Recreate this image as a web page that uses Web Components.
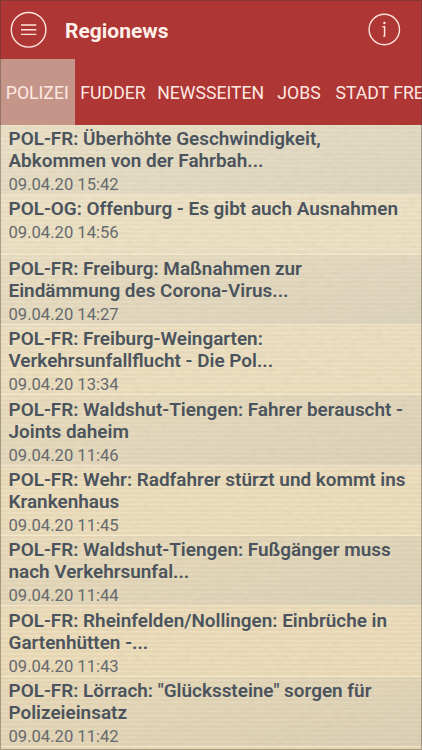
<!DOCTYPE html>
<html lang="de">
<head>
<meta charset="utf-8">
<title>Regionews</title>
<style>
    html, body{
        margin: 0;
        height: 100%;
        overflow: hidden;
    }
    body{
        font-family: Roboto, "Liberation Sans", sans-serif;
    }
</style>
</head>
<body>
<news-app>
    <news-header slot="header" name="Regionews"></news-header>
    <news-tabs slot="tabs">
        <news-tab active>POLIZEI</news-tab>
        <news-tab>FUDDER</news-tab>
        <news-tab>NEWSSEITEN</news-tab>
        <news-tab wide>JOBS</news-tab>
        <news-tab wide>STADT FRE</news-tab>
    </news-tabs>
    <news-item date="09.04.20 15:42">POL-FR: Überhöhte Geschwindigkeit,<br>Abkommen von der Fahrbah...</news-item>
    <news-item date="09.04.20 14:56" short>POL-OG: Offenburg - Es gibt auch Ausnahmen</news-item>
    <news-item date="09.04.20 14:27">POL-FR: Freiburg: Maßnahmen zur<br>Eindämmung des Corona-Virus...</news-item>
    <news-item date="09.04.20 13:34">POL-FR: Freiburg-Weingarten:<br>Verkehrsunfallflucht - Die Pol...</news-item>
    <news-item date="09.04.20 11:46">POL-FR: Waldshut-Tiengen: Fahrer berauscht -<br>Joints daheim</news-item>
    <news-item date="09.04.20 11:45">POL-FR: Wehr: Radfahrer stürzt und kommt ins<br>Krankenhaus</news-item>
    <news-item date="09.04.20 11:44">POL-FR: Waldshut-Tiengen: Fußgänger muss<br>nach Verkehrsunfal...</news-item>
    <news-item date="09.04.20 11:43">POL-FR: Rheinfelden/Nollingen: Einbrüche in<br>Gartenhütten -...</news-item>
    <news-item date="09.04.20 11:42">POL-FR: Lörrach: "Glückssteine" sorgen für<br>Polizeieinsatz</news-item>
</news-app>

<script>
class NewsApp extends HTMLElement{
    constructor(){
        super();
        this.attachShadow({mode: 'open'});
    }
    connectedCallback(){
        this.shadowRoot.innerHTML = `
        <style>
            :host{
                display: flex;
                flex-direction: column;
                height: 750px;
                position: relative;
                overflow: hidden;
            }
            .list{
                flex: 1;
                position: relative;
                overflow: hidden;
                background: linear-gradient(#e9dfc5, #e8dabb 40%, #e7d6b3);
            }
            .paper{
                position: absolute;
                inset: 0;
                width: 100%;
                height: 100%;
            }
            .rows{
                position: relative;
            }
            /* thin dark edge of the screen */
            .frame{
                position: absolute;
                inset: 0;
                border: 1px solid rgba(70, 60, 50, .4);
                pointer-events: none;
            }
        </style>
        <slot name="header"></slot>
        <slot name="tabs"></slot>
        <div class="list">
            <svg class="paper">
                <filter id="grain" x="0" y="0" width="100%" height="100%">
                    <feTurbulence type="fractalNoise" baseFrequency=".12 .3" numOctaves="2" seed="4"/>
                    <feColorMatrix values="0 0 0 0 .55  0 0 0 0 .47  0 0 0 0 .32  1.2 0 0 0 -.5"/>
                </filter>
                <pattern id="weave" width="6" height="4.4" patternUnits="userSpaceOnUse">
                    <rect width="6" height="1.6" fill="#fff4d6" opacity=".28"/>
                </pattern>
                <rect width="100%" height="100%" fill="url(#weave)"/>
                <rect width="100%" height="100%" filter="url(#grain)" opacity=".28"/>
            </svg>
            <div class="rows"><slot></slot></div>
        </div>
        <div class="frame"></div>
        `;
    }
}

class NewsHeader extends HTMLElement{
    constructor(){
        super();
        this.attachShadow({mode: 'open'});
    }
    connectedCallback(){
        this.shadowRoot.innerHTML = `
        <style>
            :host{
                display: flex;
                align-items: center;
                box-sizing: border-box;
                height: 59px;
                padding: 0 21px 0 10px;
                background: #ae3634;
                color: #fff0ea;
            }
            svg{
                display: block;
                fill: none;
                stroke: #ffe3dc;
            }
            .name{
                flex: 1;
                padding: 3px 0 0 18px;
                font-size: 21px;
                font-weight: 700;
                line-height: 24px;
            }
        </style>
        <svg width="37" height="37" viewBox="0 0 37 37" stroke-width="1.4">
            <circle cx="18.6" cy="18.8" r="17.3"/>
            <path d="M11 14h15.3M11 18.7h15.3M11 23.4h15.3"/>
        </svg>
        <div class="name">${this.getAttribute('name')}</div>
        <svg width="33" height="33" viewBox="0 0 33 33" stroke-width="1.4">
            <circle cx="16.3" cy="16.5" r="15.2"/>
            <path d="M14.6 13.8h2v9.4M15.2 23.1h2.2" stroke-width="1.5"/>
            <circle cx="16.4" cy="10" r="1.2" fill="#ffe3dc" stroke="none"/>
        </svg>
        `;
    }
}

class NewsTabs extends HTMLElement{
    constructor(){
        super();
        this.attachShadow({mode: 'open'});
    }
    connectedCallback(){
        this.shadowRoot.innerHTML = `
        <style>
            :host{
                display: flex;
                height: 66px;
                overflow: hidden;
                background: #ae3634;
            }
        </style>
        <slot></slot>
        `;
    }
}

class NewsTab extends HTMLElement{
    constructor(){
        super();
        this.attachShadow({mode: 'open'});
    }
    connectedCallback(){
        this.shadowRoot.innerHTML = `
        <style>
            :host{
                display: flex;
                flex: none;
                align-items: center;
                padding: 1px 5.8px 0;
                color: #ffe9e2;
                font-size: 17.65px;
                white-space: nowrap;
            }
            :host([wide]){
                padding: 1px 7.4px 0;
            }
            :host([active]){
                background: #c6958a;
            }
        </style>
        <slot></slot>
        `;
    }
}

class NewsItem extends HTMLElement{
    constructor(){
        super();
        this.attachShadow({mode: 'open'});
    }
    connectedCallback(){
        this.shadowRoot.innerHTML = `
        <style>
            :host{
                display: block;
                box-sizing: border-box;
                height: 70.3px;
                padding: 3.2px 0 0 8.5px;
                border-bottom: 1px solid rgba(255, 250, 230, .4);
                color: #4b545d;
                white-space: nowrap;
            }
            :host([short]){
                height: 59.6px;
            }
            :host(:nth-of-type(odd)){
                background: linear-gradient(165deg, rgba(198, 198, 186, .08), rgba(190, 188, 176, .34));
            }
            .title{
                font-size: 18.92px;
                font-weight: 600;
                line-height: 22px;
            }
            .date{
                font-size: 16.6px;
                line-height: 25px;
                color: #656a6e;
            }
        </style>
        <div class="title"><slot></slot></div>
        <div class="date">${this.getAttribute('date')}</div>
        `;
    }
}

window.customElements.define('news-app', NewsApp);
window.customElements.define('news-header', NewsHeader);
window.customElements.define('news-tabs', NewsTabs);
window.customElements.define('news-tab', NewsTab);
window.customElements.define('news-item', NewsItem);
</script>
</body>
</html>
